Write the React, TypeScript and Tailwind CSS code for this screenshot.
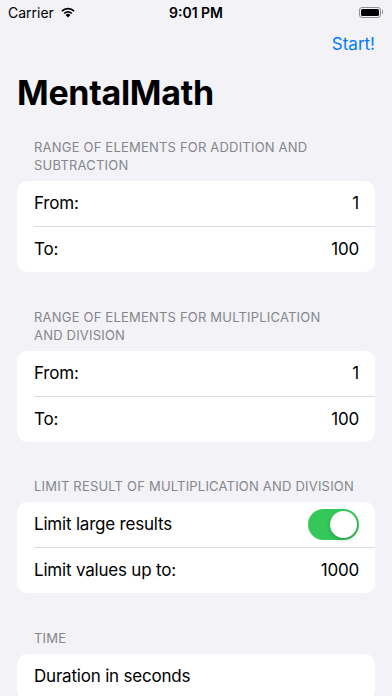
import React from "react";

const font = { fontFamily: "Inter, 'Noto Sans', sans-serif" };

function Row({ label, value, divider }: { label: string; value?: React.ReactNode; divider?: boolean }) {
  return (
    <div className="pl-[17px]">
      <div className={`flex h-[45.5px] items-center justify-between pr-[16px] ${divider ? "border-b border-[#dcdce0]" : ""}`}>
        <span className="text-[17px] tracking-[-0.2px] text-black">{label}</span>
        {value !== undefined && <span className="text-[17px] tracking-[-0.2px] text-black">{value}</span>}
      </div>
    </div>
  );
}

function Header({ children, top = "pt-[34px]" }: { children: React.ReactNode; top?: string }) {
  return (
    <div className={`${top} pb-[7px] pl-[34px] text-[13px] leading-[18px] text-[#86868b] whitespace-nowrap tracking-[0.2px]`}>
      {children}
    </div>
  );
}

function Card({ children }: { children: React.ReactNode }) {
  return <div className="mx-[17px] overflow-hidden rounded-[10px] bg-white">{children}</div>;
}

export default function App() {
  return (
    <div className="h-[696px] w-[392px] overflow-hidden bg-[#f2f2f7]" style={font}>
      {/* status bar */}
      <div className="relative flex h-[24px] items-center px-[8px]">
        <span className="text-[14px] text-black">Carrier</span>
        <svg className="ml-[6px]" width="16" height="12" viewBox="0 0 16 12">
          <path d="M8 11.5 L5.6 8.9 A3.4 3.4 0 0 1 10.4 8.9 Z" fill="black" />
          <path d="M3.6 6.9 A6.3 6.3 0 0 1 12.4 6.9 L11.2 8.1 A4.6 4.6 0 0 0 4.8 8.1 Z" fill="black" />
          <path d="M1.3 4.6 A9.5 9.5 0 0 1 14.7 4.6 L13.5 5.8 A7.8 7.8 0 0 0 2.5 5.8 Z" fill="black" />
        </svg>
        <span className="absolute left-1/2 -translate-x-1/2 text-[14px] font-semibold text-black">9:01 PM</span>
        <div className="ml-auto mr-[1px] flex items-center">
          <div className="flex h-[11px] w-[22px] items-center rounded-[3px] border border-[#8e8e93] p-[1px]">
            <div className="h-full w-full rounded-[1.5px] bg-black" />
          </div>
          <div className="ml-[1px] h-[4px] w-[1.5px] rounded-r bg-[#8e8e93]" />
        </div>
      </div>
      {/* nav */}
      <div className="flex h-[42px] items-center justify-end pr-[17px]">
        <span className="text-[17px] text-[#007aff]">Start!</span>
      </div>
      <div className="px-[17px] pt-[6px]">
        <h1 className="text-[34px] font-bold leading-[41px] tracking-[-0.3px] text-black">MentalMath</h1>
      </div>

      <Header top="pt-[25px]">
        RANGE OF ELEMENTS FOR ADDITION AND
        <br />
        SUBTRACTION
      </Header>
      <Card>
        <Row label="From:" value="1" divider />
        <Row label="To:" value="100" />
      </Card>

      <Header top="pt-[36px]">
        RANGE OF ELEMENTS FOR MULTIPLICATION
        <br />
        AND DIVISION
      </Header>
      <Card>
        <Row label="From:" value="1" divider />
        <Row label="To:" value="100" />
      </Card>

      <Header top="pt-[35px]">LIMIT RESULT OF MULTIPLICATION AND DIVISION</Header>
      <Card>
        <Row
          label="Limit large results"
          divider
          value={
            <span className="flex h-[31px] w-[51px] items-center justify-end rounded-full bg-[#34c759] p-[2px]">
              <span className="h-[27px] w-[27px] rounded-full bg-white shadow-[0_2px_4px_rgba(0,0,0,0.2)]" />
            </span>
          }
        />
        <Row label="Limit values up to:" value="1000" />
      </Card>

      <Header top="pt-[36px]">TIME</Header>
      <Card>
        <Row label="Duration in seconds" />
      </Card>
    </div>
  );
}
